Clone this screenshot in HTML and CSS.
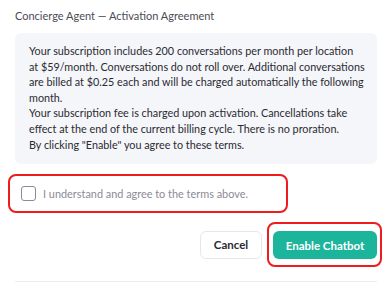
FILE: index.html
```html
<!DOCTYPE html>
<html>
<head>
<meta charset="utf-8">
<link rel="stylesheet" href="styles.css">
</head>
<body>
<div class="dialog">
  <div class="title">Concierge Agent — Activation Agreement</div>
  <div class="terms">
    <p>Your subscription includes 200 conversations per month per location<br>at $59/month. Conversations do not roll over. Additional conversations<br>are billed at $0.25 each and will be charged automatically the following<br>month.</p>
    <p>Your subscription fee is charged upon activation. Cancellations take<br>effect at the end of the current billing cycle. There is no proration.</p>
    <p>By clicking "Enable" you agree to these terms.</p>
  </div>
  <label class="agree">
    <span class="box"></span>
    <span class="agree-text">I understand and agree to the terms above.</span>
  </label>
  <div class="actions">
    <button class="btn cancel">Cancel</button>
    <div class="highlight"><button class="btn enable">Enable Chatbot</button></div>
  </div>
  <div class="divider"></div>
</div>
</body>
</html>
```
FILE: styles.css
```css
html, body { margin: 0; padding: 0; background: #fff; }
body { font-family: "Lato", "Noto Sans", sans-serif; }
.dialog { width: 362px; padding: 8px 12px 0 15px; }
.title { font-size: 11px; color: #4b4b55; line-height: 14px; margin-top: 1px; }
.terms {
  margin-top: 10px;
  background: #f5f6f9;
  border-radius: 6px;
  padding: 10px 10px 12px 14px;
  font-size: 10.8px;
  line-height: 15.6px;
  color: #2a2a33;
  white-space: nowrap;
}
.terms p { margin: 0; }
.agree {
  margin: 10px 0 0 -7px;
  width: 265px;
  height: 35px;
  border: 2px solid #ee1c1c;
  border-radius: 8px;
  display: flex;
  align-items: center;
  gap: 7px;
  padding-left: 11px;
}
.box { width: 15px; height: 15px; border: 1.5px solid #8a8a99; border-radius: 3px; box-sizing: border-box; }
.agree-text { font-size: 10.9px; color: #8b8b96; }
.actions { display: flex; justify-content: flex-end; align-items: center; gap: 5px; margin-top: 9px; margin-right: -5px; }
.btn { font-family: inherit; font-size: 11.5px; font-weight: 700; border-radius: 6px; height: 28px; cursor: pointer; }
.cancel { background: #fff; border: 1px solid #e5e7eb; color: #2a2a33; width: 62px; }
.highlight { border: 2px solid #ee1c1c; border-radius: 8px; padding: 7px 3px 6px 4px; }
.enable { background: #1cb59c; color: #fff; border: none; width: 104px; }
.divider { height: 1px; background: #ececef; margin-top: 14px; }
```
